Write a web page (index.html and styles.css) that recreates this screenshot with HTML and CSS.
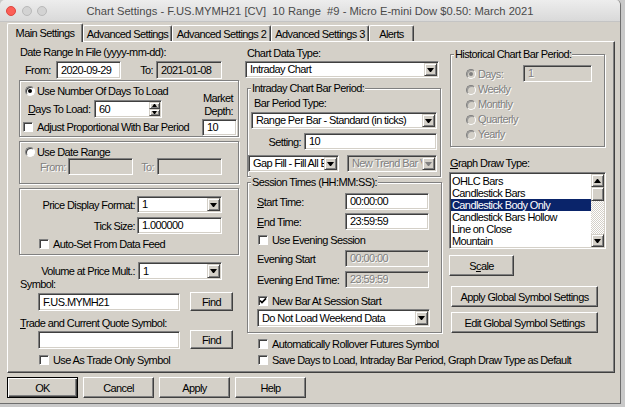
FILE: index.html
```html
<!DOCTYPE html>
<html>
<head>
<meta charset="utf-8">
<title>Chart Settings</title>
<link rel="stylesheet" href="styles.css">
</head>
<body>
<div class="window">
  <div class="titlebar">
    <div class="lights"><span class="light red"></span><span class="light"></span><span class="light"></span></div>
    <div class="title">Chart Settings - F.US.MYMH21 [CV]  10 Range  #9 - Micro E-mini Dow $0.50: March 2021</div>
    <div></div>
  </div>
  <div class="content">
    <div class="tabs">
      <div class="tab active t1">Main Settings</div>
      <div class="tab t2">Advanced Settings</div>
      <div class="tab t3">Advanced Settings 2</div>
      <div class="tab t4">Advanced Settings 3</div>
      <div class="tab t5">Alerts</div>
    </div>
    <div class="panel">
      <!-- LEFT COLUMN -->
      <div class="col col-left">
        <div class="lbl l-range">Date Range In File (yyyy-mm-dd):</div>
        <div class="row r-from">
          <span class="w-from">From:</span>
          <div class="inp h18 w65">2020-09-29</div>
          <span class="w-to">To:</span>
          <div class="inp ro h18 w66">2021-01-08</div>
        </div>
        <div class="group g-days">
          <div class="gd-left">
            <div class="row r-usedays"><span class="rb on"></span><span>Use Number Of Days To Load</span></div>
            <div class="row r-daysload">
              <span class="w-daysload"><u>D</u>ays To Load:</span>
              <div class="inp spin-inp"><span class="v">60</span>
                <div class="spin"><span class="sbtn up small"></span><span class="sbtn down small"></span></div>
              </div>
            </div>
            <div class="row r-adjust"><span class="cb"></span><span>Adjust Proportional With Bar Period</span></div>
          </div>
          <div class="gd-right">
            <div class="depth-lbl">Market<br>Depth:</div>
            <div class="inp w35">10</div>
          </div>
        </div>
        <div class="group g-range">
          <div class="row r-usedr"><span class="rb"></span><span>Use Date Range</span></div>
          <div class="row r-dr">
            <span class="w-dfrom gray">From:</span>
            <div class="inp dis w65"></div>
            <span class="w-dto gray">To:</span>
            <div class="inp dis w65"></div>
          </div>
        </div>
        <div class="group g-price">
          <div class="row r-pdf">
            <span class="w-pl">Price Display Format:</span>
            <div class="inp sel w85"><span class="v">1</span><span class="arr"></span></div>
          </div>
          <div class="row r-tick">
            <span class="w-pl">Tick Size:</span>
            <div class="inp w85">1.000000</div>
          </div>
          <div class="row r-auto"><span class="cb"></span><span>Auto-Set From Data Feed</span></div>
        </div>
        <div class="row r-vol">
          <span class="w-vol">Volume at Price Mult.:</span>
          <div class="inp sel h18 w84"><span class="v">1</span><span class="arr"></span></div>
        </div>
        <div class="lbl l-sym">Symbol:</div>
        <div class="row r-sym">
          <div class="inp h18 w142">F.US.MYMH21</div>
          <div class="btn find">Find</div>
        </div>
        <div class="lbl l-trade"><u>T</u>rade and Current Quote Symbol:</div>
        <div class="row r-trade">
          <div class="inp h18 w142"></div>
          <div class="btn find">Find</div>
        </div>
        <div class="row r-tonly"><span class="cb"></span><span>Use As Trade Only Symbol</span></div>
      </div>

      <!-- MIDDLE COLUMN -->
      <div class="col col-mid">
        <div class="lbl l-cdt">Chart Data Type:</div>
        <div class="inp sel w194"><span class="v">Intraday Chart</span><span class="arr"></span></div>
        <div class="group g-intra">
          <div class="legend">Intraday Chart Bar Period:</div>
          <div class="lbl l-bpt">Bar Period Type:</div>
          <div class="inp sel w186"><span class="v">Range Per Bar - Standard (in ticks)</span><span class="arr"></span></div>
          <div class="row r-set">
            <span class="w-set">Setting:</span>
            <div class="inp w133">10</div>
          </div>
          <div class="row r-gap">
            <div class="inp sel w91"><span class="v">Gap Fill - Fill All E</span><span class="arr"></span></div>
            <div class="inp sel dis w90"><span class="v">New Trend Bar V</span><span class="arr"></span></div>
          </div>
        </div>
        <div class="group g-sess">
          <div class="legend">Session Times (HH:MM:SS):</div>
          <div class="row r-time r-start"><span class="w-time"><u>S</u>tart Time:</span><div class="inp w84">00:00:00</div></div>
          <div class="row r-time r-end"><span class="w-time"><u>E</u>nd Time:</span><div class="inp w84">23:59:59</div></div>
          <div class="row r-scb r-eve"><span class="cb"></span><span>Use Evening Session</span></div>
          <div class="row r-time r-estart"><span class="w-time">Evening Start</span><div class="inp dis w84">00:00:00</div></div>
          <div class="row r-time r-eend"><span class="w-time">Evening End Time:</span><div class="inp dis w84">23:59:59</div></div>
          <div class="row r-scb r-newbar"><span class="cb"><svg width="8" height="8" viewBox="0 0 8 8"><path d="M1 3.5 L3 5.6 L7 1.4" fill="none" stroke="#000" stroke-width="1.7"/></svg></span><span>New Bar At Session Start</span></div>
          <div class="inp sel h18 w173"><span class="v">Do Not Load Weekend Data</span><span class="arr"></span></div>
        </div>
        <div class="row r-roll"><span class="cb"></span><span>Automatically Rollover Futures Symbol</span></div>
        <div class="row r-save"><span class="cb"></span><span>Save Days to Load, Intraday Bar Period, Graph Draw Type as Default</span></div>
      </div>

      <!-- RIGHT COLUMN -->
      <div class="col col-right">
        <div class="group g-hist">
          <div class="legend">Historical Chart Bar Period:</div>
          <div class="row r-hdays"><span class="rb off on"></span><span class="w-hd gray">Days:</span><div class="inp dis w69">1</div></div>
          <div class="row r-h"><span class="rb off"></span><span class="gray">Weekly</span></div>
          <div class="row r-h"><span class="rb off"></span><span class="gray">Monthly</span></div>
          <div class="row r-h"><span class="rb off"></span><span class="gray">Quarterly</span></div>
          <div class="row r-h"><span class="rb off"></span><span class="gray">Yearly</span></div>
        </div>
        <div class="lbl l-gdt"><u>G</u>raph Draw Type:</div>
        <div class="list">
          <div class="items">
            <div class="item">OHLC Bars</div>
            <div class="item">Candlestick Bars</div>
            <div class="item selected">Candlestick Body Only</div>
            <div class="item">Candlestick Bars Hollow</div>
            <div class="item">Line on Close</div>
            <div class="item">Mountain</div>
          </div>
          <div class="vscroll">
            <span class="sbtn up vs-btn"></span>
            <span class="sbtn vs-thumb"></span>
            <span class="vs-track"></span>
            <span class="sbtn down vs-btn"></span>
          </div>
        </div>
        <div class="btn scale">S<u>c</u>ale</div>
        <div class="btn glob apply-g">Apply Global Symbol Settings</div>
        <div class="btn glob edit-g">Edit Global Symbol Settings</div>
      </div>
    </div>
    <div class="buttons">
      <div class="btn def bb">OK</div>
      <div class="btn bb">Cancel</div>
      <div class="btn bb">Apply</div>
      <div class="btn bb">Help</div>
    </div>
  </div>
</div>
</body>
</html>
```

FILE: styles.css
```css
* { box-sizing: border-box; margin: 0; padding: 0; }
body {
  margin: 0;
  width: 625px;
  height: 407px;
  overflow: hidden;
  background: #c9c9c9;
  font-family: "Liberation Sans", Arial, sans-serif;
  font-size: 11px;
  letter-spacing: -0.6px;
  color: #000;
}
u { text-decoration: underline; text-underline-offset: 1px; }

.window {
  width: 621px;
  height: 404px;
  background: #d4d0c8;
  border-right: 1px solid #6e6e6e;
  border-bottom: 1px solid #6e6e6e;
  border-radius: 5px 5px 0 0;
  overflow: hidden;
}
.titlebar {
  height: 22px;
  display: grid;
  grid-template-columns: 60px 1fr 60px;
  align-items: center;
  background: linear-gradient(#ededed, #d9d9d9);
  border-bottom: 1px solid #c4c4c4;
}
.lights { display: flex; gap: 5.5px; padding-left: 6px; }
.light { width: 10px; height: 10px; border-radius: 50%; background: #d3d3d3; border: 1px solid #b9b9b9; }
.light.red { background: #fc5f57; border-color: #de463f; }
.title {
  text-align: center;
  white-space: pre;
  font-size: 11.2px;
  letter-spacing: 0;
  color: #4a4a4a;
}

.content { padding: 1px 0 0 7px; }

.tabs { display: flex; height: 18px; align-items: flex-end; }
.tab {
  height: 16px;
  border-top: 1px solid #fff;
  border-left: 1px solid #fff;
  border-right: 1px solid #404040;
  box-shadow: inset -1px 0 #808080;
  border-radius: 2px 2px 0 0;
  text-align: center;
  line-height: 12px;
  padding-top: 2px;
  white-space: nowrap;
}
.tab.active {
  height: 19px;
  margin-bottom: -1px;
  position: relative;
  z-index: 1;
  background: #d4d0c8;
  padding-top: 3px;
}
.t1 { width: 76px; }
.t2 { width: 89px; }
.t3 { width: 99px; }
.t4 { width: 98px; }
.t5 { width: 45px; }

.panel {
  width: 608px;
  height: 332px;
  border: 1px solid;
  border-color: #fff #404040 #404040 #fff;
  box-shadow: inset -1px -1px #808080;
  display: flex;
  padding-left: 11px;
}
.col { display: flex; flex-direction: column; align-items: flex-start; }
.col-left { width: 226px; }
.col-mid { width: 204px; }
.col-right { width: 157px; }

/* generic controls */
.lbl { height: 12px; line-height: 12px; white-space: nowrap; }
.row { display: flex; align-items: center; white-space: nowrap; flex: none; }
.inp {
  height: 17px;
  flex: none;
  background: #fff;
  border: 1px solid;
  border-color: #808080 #fff #fff #808080;
  box-shadow: inset 1px 1px #404040, inset -1px -1px #d4d0c8;
  padding: 0 4px;
  line-height: 15px;
  white-space: nowrap;
  overflow: hidden;
}
.h18 { height: 18px; line-height: 16px; }
.ro { background: #d4d0c8; }
.dis { background: #d4d0c8; color: #808080; text-shadow: 1px 1px #fff; }
.gray { color: #808080; text-shadow: 1px 1px #fff; }
.sel { display: flex; align-items: center; padding: 0 1px 0 4px; }
.sel .v { flex: 1; overflow: hidden; }
.arr {
  width: 13px;
  height: 13px;
  flex: none;
  background: #d4d0c8;
  border: 1px solid;
  border-color: #d4d0c8 #404040 #404040 #d4d0c8;
  box-shadow: inset 1px 1px #fff, inset -1px -1px #808080;
  display: flex;
  align-items: center;
  justify-content: center;
}
.h18 .arr { height: 14px; }
.arr::after {
  content: "";
  box-sizing: content-box;
  width: 1px;
  height: 0;
  border-top: 4px solid #000;
  border-left: 3px solid transparent;
  border-right: 3px solid transparent;
}
.sel.dis .arr::after { border-top-color: #808080; }

.group {
  border: 1px solid #808080;
  box-shadow: inset 1px 1px #fff, 1px 1px #fff;
  display: flex;
  flex-direction: column;
  align-items: flex-start;
  flex: none;
}
.legend {
  height: 12px;
  line-height: 12px;
  margin-top: -7px;
  margin-left: 3px;
  padding: 0 1px;
  background: #d4d0c8;
  white-space: nowrap;
}

.cb {
  width: 10px;
  height: 10px;
  flex: none;
  background: #fff;
  border: 1px solid;
  border-color: #808080 #fff #fff #808080;
  box-shadow: inset 1px 1px #404040;
  margin-right: 4px;
  display: flex;
  align-items: center;
  justify-content: center;
}
.cb svg { display: block; }
.rb {
  width: 10px;
  height: 10px;
  flex: none;
  border-radius: 50%;
  background: #fff;
  border: 1px solid;
  border-color: #808080 #fff #fff #808080;
  box-shadow: inset 1px 1px #404040;
  margin-right: 2px;
  position: relative;
}
.rb.on::after {
  content: "";
  position: absolute;
  left: 2px;
  top: 2px;
  width: 4px;
  height: 4px;
  border-radius: 50%;
  background: #000;
}
.rb.off { background: #d4d0c8; box-shadow: inset 1px 1px #9a9a9a; }
.rb.off.on::after { background: #808080; }

.btn {
  height: 21px;
  flex: none;
  display: flex;
  align-items: center;
  justify-content: center;
  background: #d4d0c8;
  border: 1px solid;
  border-color: #fff #404040 #404040 #fff;
  box-shadow: inset -1px -1px #808080;
  white-space: nowrap;
}
.btn.def {
  border-color: #000;
  box-shadow: inset 1px 1px #fff, inset -1px -1px #404040, inset -2px -2px #808080;
}

.sbtn {
  display: flex;
  align-items: center;
  justify-content: center;
  background: #d4d0c8;
  border: 1px solid;
  border-color: #d4d0c8 #404040 #404040 #d4d0c8;
  box-shadow: inset 1px 1px #fff, inset -1px -1px #808080;
}
.sbtn.up::after, .sbtn.down::after {
  content: "";
  box-sizing: content-box;
  width: 1px;
  height: 0;
  border-left: 3px solid transparent;
  border-right: 3px solid transparent;
}
.sbtn.up::after { border-bottom: 4px solid #000; }
.sbtn.down::after { border-top: 4px solid #000; }
.sbtn.small.up::after { border-left-width: 2px; border-right-width: 2px; border-bottom-width: 3px; }
.sbtn.small.down::after { border-left-width: 2px; border-right-width: 2px; border-top-width: 3px; }

/* left column */
.l-range { margin-top: 4px; padding-left: 1px; height: 13px; line-height: 13px; }
.r-from { height: 18px; margin-top: 2px; padding-left: 6px; }
.w-from { width: 31px; }
.w-to { width: 35px; text-align: right; padding-right: 3px; }
.w65 { width: 65px; }
.w66 { width: 66px; }

.g-days { width: 220px; height: 57px; margin-top: 1px; flex-direction: row; }
.gd-left { display: flex; flex-direction: column; }
.r-usedays { height: 12px; margin-top: 4px; margin-left: 5px; }
.r-daysload { height: 18px; margin-top: 3px; margin-left: 8px; }
.w-daysload { width: 66px; }
.spin-inp { width: 68px; height: 18px; display: flex; align-items: stretch; padding: 1px 1px 1px 4px; }
.spin-inp .v { flex: 1; line-height: 14px; }
.spin { width: 11px; display: flex; flex-direction: column; }
.spin .sbtn { flex: 1; }
.r-adjust { height: 12px; margin-top: 3px; margin-left: 3px; }
.gd-right { margin-left: auto; margin-right: 1px; display: flex; flex-direction: column; align-items: flex-end; }
.depth-lbl { margin-top: 11px; line-height: 13px; text-align: right; padding-right: 4px; }
.w35 { width: 35px; margin-top: 1px; }

.g-range { width: 220px; height: 43px; margin-top: 4px; }
.r-usedr { height: 12px; margin-top: 4px; margin-left: 5px; }
.r-dr { height: 17px; padding-left: 20px; }
.w-dfrom { width: 28px; }
.w-dto { width: 24px; text-align: right; padding-right: 3px; }

.g-price { width: 220px; height: 67px; margin-top: 4px; }
.r-pdf { height: 17px; margin-top: 7px; }
.w-pl { width: 117px; text-align: right; padding-right: 2px; }
.w85 { width: 85px; }
.r-tick { height: 17px; margin-top: 4px; }
.r-auto { height: 12px; margin-top: 4px; margin-left: 19px; }

.r-vol { height: 18px; margin-top: 7px; }
.w-vol { width: 119px; text-align: right; padding-right: 3px; }
.w84 { width: 84px; }
.l-sym { margin-top: -2px; padding-left: 1px; }
.r-sym { height: 19px; margin-top: 2px; padding-left: 19px; }
.w142 { width: 142px; }
.find { width: 43px; height: 19px; margin-left: 10px; }
.l-trade { margin-top: 6px; padding-left: 1px; }
.r-trade { height: 19px; margin-top: 1px; padding-left: 19px; }
.r-tonly { height: 12px; margin-top: 5px; padding-left: 20px; }

/* middle column */
.l-cdt { margin-top: 5px; padding-left: 2px; }
.w194 { width: 194px; margin-top: 2px; }
.g-intra { width: 194px; margin-top: 10px; margin-left: 2px; padding-bottom: 4px; }
.l-bpt { margin-top: 3px; padding-left: 6px; }
.w186 { width: 186px; margin-top: 3px; margin-left: 3px; }
.r-set { height: 17px; margin-top: 4px; }
.w-set { width: 56px; text-align: right; padding-right: 3px; }
.w133 { width: 133px; }
.r-gap { height: 17px; margin-top: 5px; }
.w91 { width: 91px; }
.w90 { width: 90px; margin-left: 8px; }

.g-sess { width: 195px; margin-top: 5px; margin-left: 2px; padding-bottom: 5px; }
.r-time { height: 17px; padding-left: 9px; }
.w-time { width: 88px; }
.r-start { margin-top: 5px; }
.r-end { margin-top: 3px; }
.r-scb { height: 12px; padding-left: 10px; }
.r-eve { margin-top: 4px; }
.r-estart { margin-top: 4px; }
.r-eend { margin-top: 4px; }
.r-newbar { margin-top: 7px; }
.w173 { width: 173px; margin-left: 9px; margin-top: 2px; }
.r-roll { height: 12px; margin-top: 5px; padding-left: 13px; }
.r-save { height: 12px; margin-top: 4px; padding-left: 13px; }

/* right column */
.g-hist { width: 155px; margin-top: 12px; margin-left: 1px; padding-bottom: 4px; }
.r-hdays { height: 17px; margin-top: 5px; padding-left: 15px; }
.w-hd { width: 45px; }
.w69 { width: 69px; }
.r-h { height: 15px; line-height: 15px; padding-left: 15px; }
.l-gdt { margin-top: 10px; margin-left: 1px; }

.list {
  width: 157px;
  height: 77px;
  flex: none;
  margin-top: 3px;
  background: #fff;
  border: 1px solid;
  border-color: #808080 #fff #fff #808080;
  box-shadow: inset 1px 1px #404040, inset -1px -1px #d4d0c8;
  display: flex;
  padding: 1px;
}
.items { flex: 1; padding-top: 1px; overflow: hidden; }
.item { height: 12px; line-height: 12px; padding-left: 1px; white-space: nowrap; }
.item.selected { background: #0a246a; color: #fff; }
.vscroll { width: 13px; display: flex; flex-direction: column; }
.vs-btn { height: 13px; flex: none; }
.vs-thumb { height: 14px; flex: none; }
.vs-track { flex: 1; background: repeating-conic-gradient(#fff 0 25%, #d4d0c8 0 50%) 0 0 / 2px 2px; }

.scale { width: 65px; margin-top: 6px; }
.glob { width: 147px; margin-left: 2px; }
.apply-g { margin-top: 10px; }
.edit-g { margin-top: 5px; }

/* bottom buttons */
.buttons { display: flex; gap: 5px; margin-top: 4px; }
.bb { width: 71px; }
```
